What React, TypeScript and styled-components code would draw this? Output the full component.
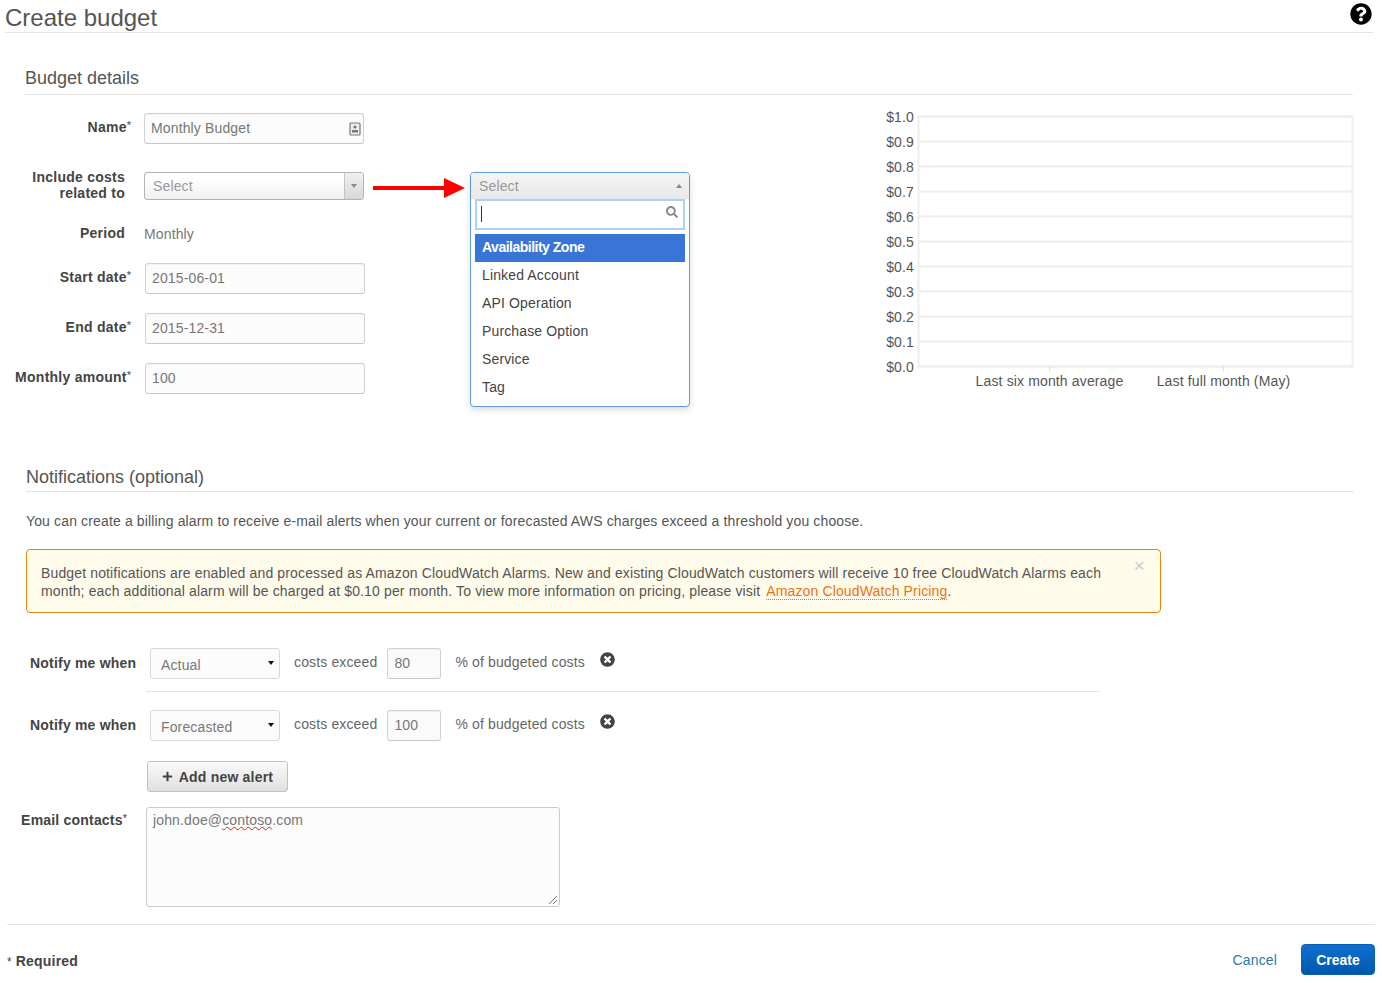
import styled, { createGlobalStyle } from 'styled-components';
import { FaQuestionCircle, FaSearch, FaTimesCircle, FaPlus } from 'react-icons/fa';

const GlobalStyle = createGlobalStyle`
  html, body {
    margin: 0;
    padding: 0;
    background: #fff;
  }
  body {
    font-family: "Liberation Sans", Arial, sans-serif;
    font-size: 14px;
    letter-spacing: 0.14px;
    color: #555;
  }
`;

const Page = styled.div`
  width: 1382px;
  height: 983px;
  overflow: hidden;
`;

const Header = styled.header`
  display: flex;
  justify-content: space-between;
  height: 32px;
  margin: 0 9px 0 5px;
  border-bottom: 1px solid #e4e4e4;
`;

const Title = styled.h1`
  margin: 0;
  padding-top: 4px;
  font-size: 24px;
  line-height: 28px;
  font-weight: normal;
  letter-spacing: 0;
  color: #555;
`;

const HelpIcon = styled(FaQuestionCircle)`
  width: 22px;
  height: 22px;
  margin-top: 3px;
  margin-right: 1px;
  color: #000;
`;

const SectionTitle = styled.h2<{ $top: number; $bottom: number }>`
  margin: ${p => p.$top}px 0 0;
  padding-bottom: ${p => p.$bottom}px;
  font-size: 18px;
  line-height: 20px;
  font-weight: normal;
  letter-spacing: 0;
  color: #555;
  border-bottom: 1px solid #e4e4e4;
`;

const BudgetHeading = styled.div`
  margin: 0 29px 0 25px;
`;

const BudgetBody = styled.div`
  display: flex;
  align-items: flex-start;
  height: 364px;
  padding: 8px 26px 0 0;
`;

const FormColumn = styled.div`
  width: 365px;
  flex: none;
`;

const FormRow = styled.div<{ $h: number; $after?: number }>`
  display: flex;
  align-items: center;
  height: ${p => p.$h}px;
  margin-bottom: ${p => p.$after ?? 0}px;
`;

const FormLabel = styled.label<{ $plain?: boolean }>`
  width: ${p => (p.$plain ? 125 : 131)}px;
  margin-right: ${p => (p.$plain ? 19 : 13)}px;
  flex: none;
  text-align: right;
  font-weight: bold;
  font-size: 14px;
  line-height: 16px;
  letter-spacing: 0.25px;
  color: #444;
  margin-top: -2px;

  sup {
    font-size: 11px;
    line-height: 0;
    font-weight: normal;
    vertical-align: 3px;
    letter-spacing: 0;
  }
`;

const Field = styled.div<{ $w?: number }>`
  position: relative;
  box-sizing: border-box;
  width: ${p => p.$w ?? 220}px;
  height: 31px;
  flex: none;
  padding: 0 6px;
  display: flex;
  align-items: center;
  background: #fcfcfc;
  border: 1px solid #d2d2d2;
  border-bottom-color: #c8c8c8;
  border-radius: 3px;
  box-shadow: inset 0 1px 1px rgba(0, 0, 0, 0.04);
  font-size: 14px;
  color: #777;
`;

const DateField = styled(Field)`
  margin-left: 1px;
`;

const CardIcon = styled.svg`
  position: absolute;
  right: 2px;
  top: 8px;
`;

const Combo = styled.div`
  display: flex;
  box-sizing: border-box;
  width: 220px;
  height: 28px;
  flex: none;
  align-items: center;
  border: 1px solid #b4b4b4;
  border-radius: 3px;
  background: linear-gradient(#fff 20%, #f0f0f0);
  overflow: hidden;
  color: #999;
`;

const ComboText = styled.span`
  flex: 1;
  padding-left: 8px;
`;

const ComboHandle = styled.span`
  display: flex;
  align-items: center;
  justify-content: center;
  width: 18px;
  height: 100%;
  border-left: 1px solid #c4c4c4;
  background: linear-gradient(#f0f0f0, #d8d8d8);
`;

const Caret = styled.i<{ $up?: boolean; $color?: string; $size?: number }>`
  display: block;
  width: 0;
  height: 0;
  border-left: ${p => p.$size ?? 3}px solid transparent;
  border-right: ${p => p.$size ?? 3}px solid transparent;
  ${p => (p.$up ? 'border-bottom' : 'border-top')}: ${p => (p.$size ?? 3) + 1}px solid ${p => p.$color ?? '#888'};
`;

const SelectCaret = styled(Caret)`
  margin-top: -3px;
`;

const PlainValue = styled.span`
  color: #777;
`;

const ArrowMark = styled.svg`
  flex: none;
  margin: 73px 0 0 8px;
`;

const Dropdown = styled.div`
  box-sizing: border-box;
  width: 220px;
  height: 235px;
  flex: none;
  margin: 69px 0 0 5px;
  padding-bottom: 5px;
  background: #fff;
  border: 1px solid #5c9ae6;
  border-radius: 4px;
  box-shadow: 0 3px 6px rgba(0, 0, 0, 0.14);
  overflow: hidden;
`;

const DropdownHead = styled.div`
  display: flex;
  align-items: center;
  justify-content: space-between;
  height: 26px;
  padding: 0 7px 0 8px;
  background: linear-gradient(#f4f4f4, #e8e8e8);
  color: #999;
`;

const SearchBox = styled.div`
  position: relative;
  box-sizing: border-box;
  height: 31px;
  margin: 0 4px 4px;
  border: 2px solid #a9d2f6;
  background: #fff;
`;

const TextCursor = styled.span`
  position: absolute;
  left: 4px;
  top: 5px;
  width: 1px;
  height: 16px;
  background: #333;
`;

const SearchIcon = styled(FaSearch)`
  position: absolute;
  right: 5px;
  top: 5px;
  width: 12px;
  height: 12px;
  color: #888;
`;

const OptionList = styled.ul`
  margin: 0 4px;
  padding: 0;
  list-style: none;
`;

const Option = styled.li<{ $active?: boolean }>`
  height: 28px;
  padding-left: 7px;
  line-height: 27px;
  color: ${p => (p.$active ? '#fff' : '#444')};
  background: ${p => (p.$active ? '#3875d7' : 'transparent')};
  font-weight: ${p => (p.$active ? 'bold' : 'normal')};
  letter-spacing: ${p => (p.$active ? '-0.5px' : 'inherit')};
`;

const ChartFrame = styled.svg`
  flex: none;
  margin: 3px 0 0 auto;
`;

const ChartText = styled.text`
  font-family: "Liberation Sans", Arial, sans-serif;
  font-size: 14px;
  fill: #555;
`;

const Notifications = styled.section`
  margin: 0 28px 0 26px;
`;

const Intro = styled.p`
  margin: 19px 0 18px;
  line-height: 20px;
  color: #555;
`;

const Alert = styled.div`
  position: relative;
  box-sizing: border-box;
  width: 1135px;
  height: 64px;
  padding: 15px 50px 0 14px;
  background: #fffbea;
  border: 1px solid #e8860e;
  border-radius: 4px;
  line-height: 17.5px;
  color: #555;
`;

const AlertLine = styled.div`
  white-space: nowrap;
`;

const AlertLink = styled.a`
  margin-left: 2px;
  color: #ec7211;
  border-bottom: 1px dotted #ec7211;
`;

const AlertClose = styled.span`
  position: absolute;
  right: 15px;
  top: 5px;
  font-size: 19px;
  line-height: 22px;
  color: #ccc;
`;

const AlertRow = styled.div<{ $top: number }>`
  display: flex;
  align-items: center;
  height: 32px;
  margin-top: ${p => p.$top}px;
  padding-left: 4px;
`;

const AlertLabel = styled.span`
  width: 120px;
  flex: none;
  margin-top: -1px;
  font-weight: bold;
  letter-spacing: 0.2px;
  color: #444;
`;

const AlertSelect = styled.div`
  display: flex;
  align-items: center;
  justify-content: space-between;
  box-sizing: border-box;
  width: 130px;
  height: 31px;
  padding: 3px 5px 0 10px;
  background: #fcfcfc;
  border: 1px solid #d8d8d8;
  border-radius: 3px;
  color: #777;
`;

const Muted = styled.span<{ $left: number }>`
  margin-left: ${p => p.$left}px;
  margin-top: -3px;
  color: #666;
`;

const AmountField = styled(Field)`
  margin-left: 10px;
  background: #fafafa;
`;

const RemoveIcon = styled(FaTimesCircle)`
  width: 15px;
  height: 15px;
  margin: -8px 0 0 15px;
  color: #444;
`;

const Divider = styled.div`
  height: 1px;
  width: 954px;
  margin: 12px 0 17px 120px;
  background: #e4e4e4;
`;

const AddButton = styled.button`
  display: flex;
  align-items: center;
  justify-content: center;
  gap: 6px;
  box-sizing: border-box;
  width: 141px;
  height: 31px;
  margin: 20px 0 0 121px;
  padding: 0;
  background: linear-gradient(#fafafa, #e0e0e0);
  border: 1px solid #c2c2c2;
  border-radius: 3px;
  font-family: inherit;
  font-size: 14px;
  font-weight: bold;
  letter-spacing: 0.2px;
  color: #444;
`;

const EmailRow = styled.div`
  display: flex;
  align-items: flex-start;
  margin-top: 15px;
`;

const EmailLabel = styled.label`
  display: flex;
  justify-content: flex-end;
  width: 101px;
  margin-right: 19px;
  padding-top: 5px;
  white-space: nowrap;
  font-weight: bold;
  letter-spacing: 0.2px;
  color: #444;

  sup {
    font-size: 11px;
    line-height: 0;
    font-weight: normal;
    vertical-align: 3px;
    letter-spacing: 0;
  }
`;

const EmailBox = styled.div`
  position: relative;
  box-sizing: border-box;
  width: 414px;
  height: 100px;
  padding: 3px 6px;
  background: #fcfcfc;
  border: 1px solid #ccc;
  border-radius: 3px;
  line-height: 18px;
  color: #777;
`;

const Misspelt = styled.span`
  text-decoration: underline wavy #e02020 1px;
`;

const ResizeGrip = styled.svg`
  position: absolute;
  right: 1px;
  bottom: 1px;
`;

const Footer = styled.footer`
  display: flex;
  align-items: center;
  margin: 17px 7px 0;
  padding-top: 19px;
  border-top: 1px solid #e4e4e4;
`;

const RequiredNote = styled.span`
  margin-top: 3px;
  flex: 1;
  font-weight: bold;
  letter-spacing: 0.2px;
  color: #444;

  small {
    font-size: 12px;
    font-weight: normal;
    letter-spacing: 0;
  }
`;

const CancelLink = styled.a`
  margin-right: 24px;
  color: #2779a8;
`;

const CreateButton = styled.button`
  box-sizing: border-box;
  width: 74px;
  height: 31px;
  padding: 0;
  background: linear-gradient(#1070cf, #0058ad);
  border: 1px solid #0a5fb4;
  border-radius: 4px;
  font-family: inherit;
  font-size: 14px;
  font-weight: bold;
  color: #fff;
`;

const yTicks = ['$1.0', '$0.9', '$0.8', '$0.7', '$0.6', '$0.5', '$0.4', '$0.3', '$0.2', '$0.1', '$0.0'];
const costOptions = ['Linked Account', 'API Operation', 'Purchase Option', 'Service', 'Tag'];

function BudgetChart() {
  return (
    <ChartFrame width={476} height={290} viewBox="880 106 476 290">
      <rect x={918.5} y={116.5} width={434} height={250} fill="none" stroke="#eee" strokeWidth={2} />
      {yTicks.map((tick, i) => (
        <g key={tick}>
          <line x1={918} x2={1353} y1={116.5 + i * 25} y2={116.5 + i * 25} stroke="#eee" strokeWidth={2} />
          <ChartText x={914} y={122 + i * 25} textAnchor="end">{tick}</ChartText>
        </g>
      ))}
      <line x1={1049.5} x2={1049.5} y1={366} y2={372} stroke="#e0e0e0" />
      <line x1={1223.5} x2={1223.5} y1={366} y2={372} stroke="#e0e0e0" />
      <ChartText x={1049.5} y={386} textAnchor="middle">Last six month average</ChartText>
      <ChartText x={1223.5} y={386} textAnchor="middle">Last full month (May)</ChartText>
    </ChartFrame>
  );
}

export default function App() {
  return (
    <Page>
      <GlobalStyle />
      <Header>
        <Title>Create budget</Title>
        <HelpIcon />
      </Header>

      <BudgetHeading>
        <SectionTitle $top={35} $bottom={6}>Budget details</SectionTitle>
      </BudgetHeading>

      <BudgetBody>
        <FormColumn>
          <FormRow $h={50}>
            <FormLabel>Name<sup>*</sup></FormLabel>
            <Field>
              Monthly Budget
              <CardIcon width={12} height={14} viewBox="0 0 12 14">
                <rect x={1} y={1} width={10} height={12} rx={1} fill="#eee" stroke="#777" strokeWidth={1.2} />
                <circle cx={6} cy={5} r={1.6} fill="#777" />
                <rect x={3} y={8} width={6} height={2.5} fill="#777" />
              </CardIcon>
            </Field>
          </FormRow>
          <FormRow $h={66}>
            <FormLabel $plain>Include costs related to</FormLabel>
            <Combo>
              <ComboText>Select</ComboText>
              <ComboHandle><Caret /></ComboHandle>
            </Combo>
          </FormRow>
          <FormRow $h={30} $after={4}>
            <FormLabel $plain>Period</FormLabel>
            <PlainValue>Monthly</PlainValue>
          </FormRow>
          <FormRow $h={50}>
            <FormLabel>Start date<sup>*</sup></FormLabel>
            <DateField>2015-06-01</DateField>
          </FormRow>
          <FormRow $h={50}>
            <FormLabel>End date<sup>*</sup></FormLabel>
            <DateField>2015-12-31</DateField>
          </FormRow>
          <FormRow $h={50}>
            <FormLabel>Monthly amount<sup>*</sup></FormLabel>
            <DateField>100</DateField>
          </FormRow>
        </FormColumn>

        <ArrowMark width={92} height={24} viewBox="0 0 92 24">
          <rect x={0} y={10} width={72} height={4} fill="#f00" />
          <path d="M71 2 L92 12 L71 22 Z" fill="#f00" />
        </ArrowMark>

        <Dropdown>
          <DropdownHead>
            Select
            <Caret $up />
          </DropdownHead>
          <SearchBox>
            <TextCursor />
            <SearchIcon />
          </SearchBox>
          <OptionList>
            <Option $active>Availability Zone</Option>
            {costOptions.map(option => (
              <Option key={option}>{option}</Option>
            ))}
          </OptionList>
        </Dropdown>

        <BudgetChart />
      </BudgetBody>

      <Notifications>
        <SectionTitle $top={0} $bottom={4}>Notifications (optional)</SectionTitle>
        <Intro>You can create a billing alarm to receive e-mail alerts when your current or forecasted AWS charges exceed a threshold you choose.</Intro>
        <Alert>
          <AlertLine>Budget notifications are enabled and processed as Amazon CloudWatch Alarms. New and existing CloudWatch customers will receive 10 free CloudWatch Alarms each</AlertLine>
          <AlertLine>month; each additional alarm will be charged at $0.10 per month. To view more information on pricing, please visit <AlertLink>Amazon CloudWatch Pricing</AlertLink>.</AlertLine>
          <AlertClose>×</AlertClose>
        </Alert>

        <AlertRow $top={34}>
          <AlertLabel>Notify me when</AlertLabel>
          <AlertSelect>Actual<SelectCaret $color="#111" /></AlertSelect>
          <Muted $left={14}>costs exceed</Muted>
          <AmountField $w={54}>80</AmountField>
          <Muted $left={14}>% of budgeted costs</Muted>
          <RemoveIcon />
        </AlertRow>
        <Divider />
        <AlertRow $top={0}>
          <AlertLabel>Notify me when</AlertLabel>
          <AlertSelect>Forecasted<SelectCaret $color="#111" /></AlertSelect>
          <Muted $left={14}>costs exceed</Muted>
          <AmountField $w={54}>100</AmountField>
          <Muted $left={14}>% of budgeted costs</Muted>
          <RemoveIcon />
        </AlertRow>

        <AddButton><FaPlus size={11} /> Add new alert</AddButton>

        <EmailRow>
          <EmailLabel><span>Email contacts<sup>*</sup></span></EmailLabel>
          <EmailBox>
            john.doe@<Misspelt>contoso</Misspelt>.com
            <ResizeGrip width={10} height={10} viewBox="0 0 10 10">
              <path d="M1 9 L9 1 M5 9 L9 5" stroke="#777" strokeWidth={1} />
            </ResizeGrip>
          </EmailBox>
        </EmailRow>
      </Notifications>

      <Footer>
        <RequiredNote><small>*</small> Required</RequiredNote>
        <CancelLink>Cancel</CancelLink>
        <CreateButton>Create</CreateButton>
      </Footer>
    </Page>
  );
}
